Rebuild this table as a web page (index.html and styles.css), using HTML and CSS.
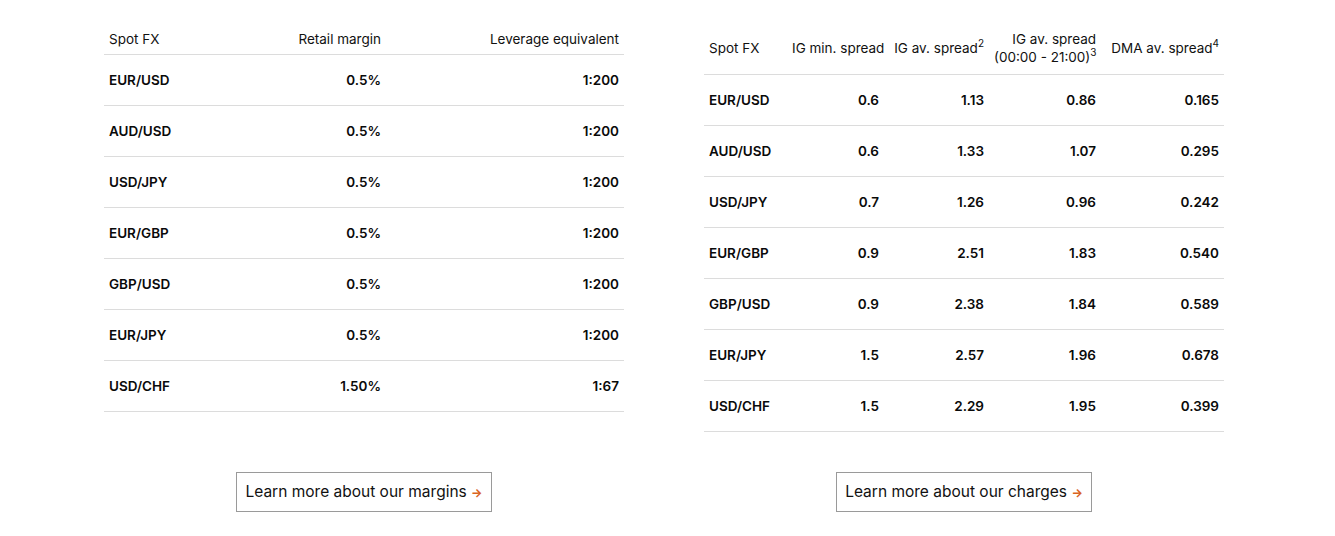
FILE: index.html
```html
<!DOCTYPE html>
<html lang="en">
<head>
<meta charset="utf-8">
<link rel="stylesheet" href="styles.css">
</head>
<body>
<div class="wrap">
  <div class="col">
    <table class="fx margins">
      <thead>
        <tr><th class="l">Spot FX</th><th>Retail margin</th><th>Leverage equivalent</th></tr>
      </thead>
      <tbody>
        <tr><td class="l">EUR/USD</td><td>0.5%</td><td>1:200</td></tr>
        <tr><td class="l">AUD/USD</td><td>0.5%</td><td>1:200</td></tr>
        <tr><td class="l">USD/JPY</td><td>0.5%</td><td>1:200</td></tr>
        <tr><td class="l">EUR/GBP</td><td>0.5%</td><td>1:200</td></tr>
        <tr><td class="l">GBP/USD</td><td>0.5%</td><td>1:200</td></tr>
        <tr><td class="l">EUR/JPY</td><td>0.5%</td><td>1:200</td></tr>
        <tr><td class="l">USD/CHF</td><td>1.50%</td><td>1:67</td></tr>
      </tbody>
    </table>
    <a class="btn" href="#">Learn more about our margins <span class="arrow">&#8594;</span></a>
  </div>
  <div class="col">
    <table class="fx spreads">
      <thead>
        <tr>
          <th class="l">Spot FX</th>
          <th>IG min. spread</th>
          <th>IG av. spread<sup>2</sup></th>
          <th>IG av. spread<br>(00:00 - 21:00)<sup>3</sup></th>
          <th>DMA av. spread<sup>4</sup></th>
        </tr>
      </thead>
      <tbody>
        <tr><td class="l">EUR/USD</td><td>0.6</td><td>1.13</td><td>0.86</td><td>0.165</td></tr>
        <tr><td class="l">AUD/USD</td><td>0.6</td><td>1.33</td><td>1.07</td><td>0.295</td></tr>
        <tr><td class="l">USD/JPY</td><td>0.7</td><td>1.26</td><td>0.96</td><td>0.242</td></tr>
        <tr><td class="l">EUR/GBP</td><td>0.9</td><td>2.51</td><td>1.83</td><td>0.540</td></tr>
        <tr><td class="l">GBP/USD</td><td>0.9</td><td>2.38</td><td>1.84</td><td>0.589</td></tr>
        <tr><td class="l">EUR/JPY</td><td>1.5</td><td>2.57</td><td>1.96</td><td>0.678</td></tr>
        <tr><td class="l">USD/CHF</td><td>1.5</td><td>2.29</td><td>1.95</td><td>0.399</td></tr>
      </tbody>
    </table>
    <a class="btn" href="#">Learn more about our charges <span class="arrow">&#8594;</span></a>
  </div>
</div>
</body>
</html>
```

FILE: styles.css
```css
html, body {
  margin: 0;
  padding: 0;
  background: #fff;
}
body {
  font-family: Inter, "Liberation Sans", sans-serif;
  color: #111;
}
.wrap {
  display: grid;
  grid-template-columns: 520px 520px;
  column-gap: 80px;
  padding: 20px 0 0 104px;
}
.col {
  display: flex;
  flex-direction: column;
  align-items: center;
  row-gap: 40px;
}
.fx {
  width: 520px;
  border-collapse: collapse;
  table-layout: fixed;
  font-size: 13.5px;
  line-height: 18px;
}
.fx th {
  font-weight: 400;
  text-align: right;
  padding: 10px 5px 6px;
  vertical-align: middle;
  border-bottom: 1px solid #dcdcdc;
  white-space: nowrap;
}
.spreads th {
  padding-bottom: 8px;
}
.fx td {
  font-weight: 600;
  text-align: right;
  padding: 16px 5px;
  border-bottom: 1px solid #dcdcdc;
  color: #0a0a0a;
}
.fx .l {
  text-align: left;
}
.margins th:nth-child(1) { width: 120px; }
.margins th:nth-child(2) { width: 142px; }
.margins th:nth-child(3) { width: 228px; }
.spreads th:nth-child(1) { width: 73px; }
.spreads th:nth-child(2) { width: 87px; }
.spreads th:nth-child(3) { width: 95px; }
.spreads th:nth-child(4) { width: 102px; }
.spreads th:nth-child(5) { width: 113px; }
.fx sup {
  font-size: 10px;
  line-height: 0;
  vertical-align: 6px;
}
.btn {
  margin-top: auto;
  display: inline-block;
  border: 1px solid #9a9a9a;
  padding: 0 8px;
  height: 38px;
  line-height: 38px;
  font-size: 15.5px;
  color: #111;
  text-decoration: none;
}
.arrow {
  color: #d9631e;
  font-size: 12px;
  font-weight: 700;
}
```
